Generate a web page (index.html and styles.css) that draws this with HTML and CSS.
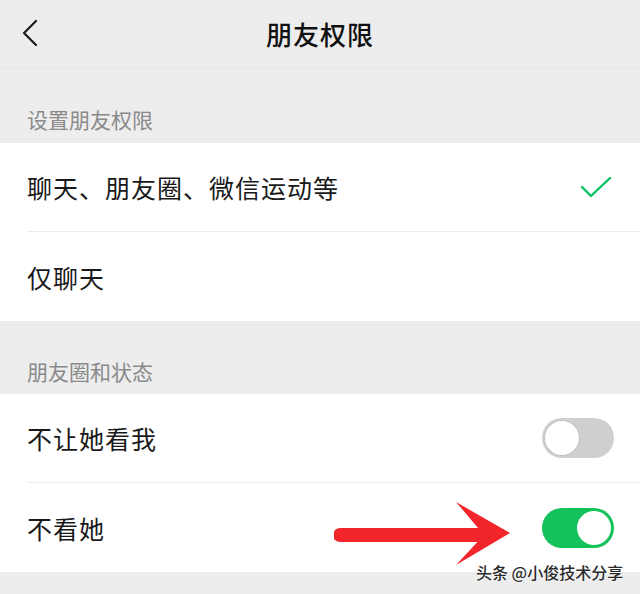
FILE: index.html
```html
<!DOCTYPE html>
<html lang="zh">
<head>
<meta charset="UTF-8">
<title>朋友权限</title>
<link rel="stylesheet" href="styles.css">
</head>
<body>
<div class="screen">
  <div class="navbar">
    <svg class="back" width="20" height="30" viewBox="0 0 20 30">
      <path d="M16 3 L4 15 L16 27" fill="none" stroke="#1a1a1a" stroke-width="2.2" stroke-linecap="round" stroke-linejoin="round"/>
    </svg>
    <div class="title">朋友权限</div>
  </div>

  <div class="section-title first">设置朋友权限</div>
  <div class="group">
    <div class="cell">
      <span class="label">聊天、朋友圈、微信运动等</span>
      <svg class="check" width="32" height="24" viewBox="0 0 32 24">
        <path d="M2 12 L11 21 L30 3" fill="none" stroke="#07c160" stroke-width="2.4" stroke-linecap="round" stroke-linejoin="round"/>
      </svg>
    </div>
    <div class="cell">
      <span class="label">仅聊天</span>
    </div>
  </div>

  <div class="section-title">朋友圈和状态</div>
  <div class="group">
    <div class="cell">
      <span class="label">不让她看我</span>
      <span class="switch"><span class="thumb"></span></span>
    </div>
    <div class="cell">
      <span class="label">不看她</span>
      <span class="switch on"><span class="thumb"></span></span>
    </div>
  </div>
  <div class="footer-gap"></div>

  <!-- annotation over the screenshot -->
  <svg class="annot-arrow" width="190" height="70" viewBox="0 0 190 70">
    <path d="M6 26 L150 26 L154 33 L150 40 L6 40 A7 7 0 0 1 6 26 Z" fill="#f2262a"/>
    <path d="M122 0 L176 31 L122 63 L150 33 Z" fill="#f2262a"/>
  </svg>
  <div class="watermark">头条 @小俊技术分享</div>
</div>
</body>
</html>
```

FILE: styles.css
```css
* {
	box-sizing: border-box;
}

body {
	margin: 0;
	background-color: #ededed;
	font-family: "Noto Sans CJK SC", "Noto Sans", sans-serif;
	color: #1a1a1a;
}

.screen {
	position: relative;
	width: 640px;
	height: 594px;
	overflow: hidden;
	background-color: #ededed;
}

.navbar {
	height: 69px;
	display: flex;
	align-items: center;
	justify-content: center;
	position: relative;
	border-bottom: 1px solid #e6e6e6;
}

.navbar .back {
	position: absolute;
	left: 20px;
	top: 18px;
}

.navbar .title {
	font-size: 26px;
	font-weight: 500;
	letter-spacing: 1px;
	color: #111;
	margin-top: -2px;
}

.section-title {
	height: 73px;
	display: flex;
	align-items: flex-end;
	padding: 0 0 8px 27px;
	font-size: 21px;
	color: #8a8a8a;
	line-height: 30px;
}

.section-title.first {
	height: 74px;
	padding-bottom: 9px;
}

.group {
	background-color: #fff;
}

.cell {
	height: 89px;
	margin-left: 27px;
	padding-right: 26px;
	display: flex;
	align-items: center;
	justify-content: space-between;
	border-bottom: 1px solid #ececec;
}

.cell:last-child {
	border-bottom: none;
}

.label {
	font-size: 25px;
	letter-spacing: 1px;
	color: #191919;
}

.check {
	margin-right: 2px;
}

.switch {
	width: 72px;
	height: 40px;
	border-radius: 20px;
	background-color: #cfcfcf;
	padding: 3px;
	display: flex;
	justify-content: flex-start;
}

.switch .thumb {
	width: 34px;
	height: 34px;
	border-radius: 50%;
	background-color: #fff;
	box-shadow: 0 0 0 1px #c4c4c4;
}

.switch.on {
	background-color: #14c25b;
	justify-content: flex-end;
}

.switch.on .thumb {
	box-shadow: none;
}

.footer-gap {
	height: 24px;
}

.annot-arrow {
	position: absolute;
	left: 334px;
	top: 502px;
}

.watermark {
	position: absolute;
	left: 476px;
	top: 560px;
	font-size: 16px;
	font-weight: 500;
	color: #2a2a2a;
	text-shadow: 0 0 2px #fff, 0 0 2px #fff;
}
```
